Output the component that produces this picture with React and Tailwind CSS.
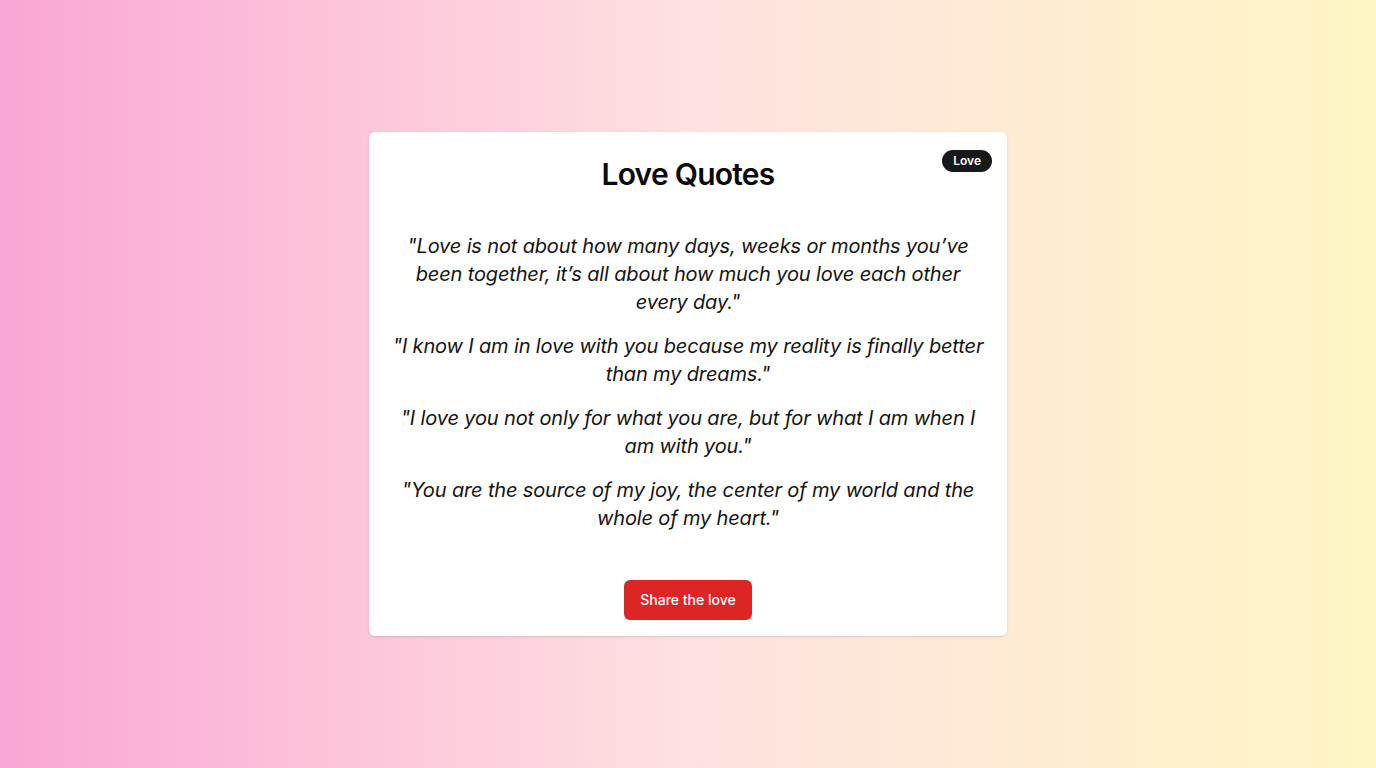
export default function App() {
  const quotes = [
    "\"Love is not about how many days, weeks or months you\u2019ve been together, it\u2019s all about how much you love each other every day.\"",
    "\"I know I am in love with you because my reality is finally better than my dreams.\"",
    "\"I love you not only for what you are, but for what I am when I am with you.\"",
    "\"You are the source of my joy, the center of my world and the whole of my heart.\"",
  ];

  return (
    <div
      className="min-h-screen w-full flex items-center justify-center bg-gradient-to-r from-[#f9a6d4] via-[#fee1e0] to-[#fef6c4]"
      style={{ fontFamily: "Inter, 'Noto Sans', sans-serif" }}
    >
      <div className="relative w-[638px] bg-white rounded-md shadow-sm pt-6 px-5 pb-4 flex flex-col items-center">
        <span className="absolute top-[18px] right-[15px] h-[22px] px-[11px] flex items-center rounded-full bg-[#18181b] text-white text-xs font-semibold">
          Love
        </span>
        <h1 className="text-3xl font-semibold tracking-tight text-[#0a0a0a] leading-9">Love Quotes</h1>
        <div className="mt-10 flex flex-col gap-4 w-full">
          {quotes.map((q, i) => (
            <p key={i} className="text-xl leading-7 italic text-center text-[#141414] tracking-[-0.15px]">
              {q}
            </p>
          ))}
        </div>
        <button className="mt-12 h-10 px-4 rounded-md bg-[#dc2626] text-white text-sm font-medium">
          Share the love
        </button>
      </div>
    </div>
  );
}
